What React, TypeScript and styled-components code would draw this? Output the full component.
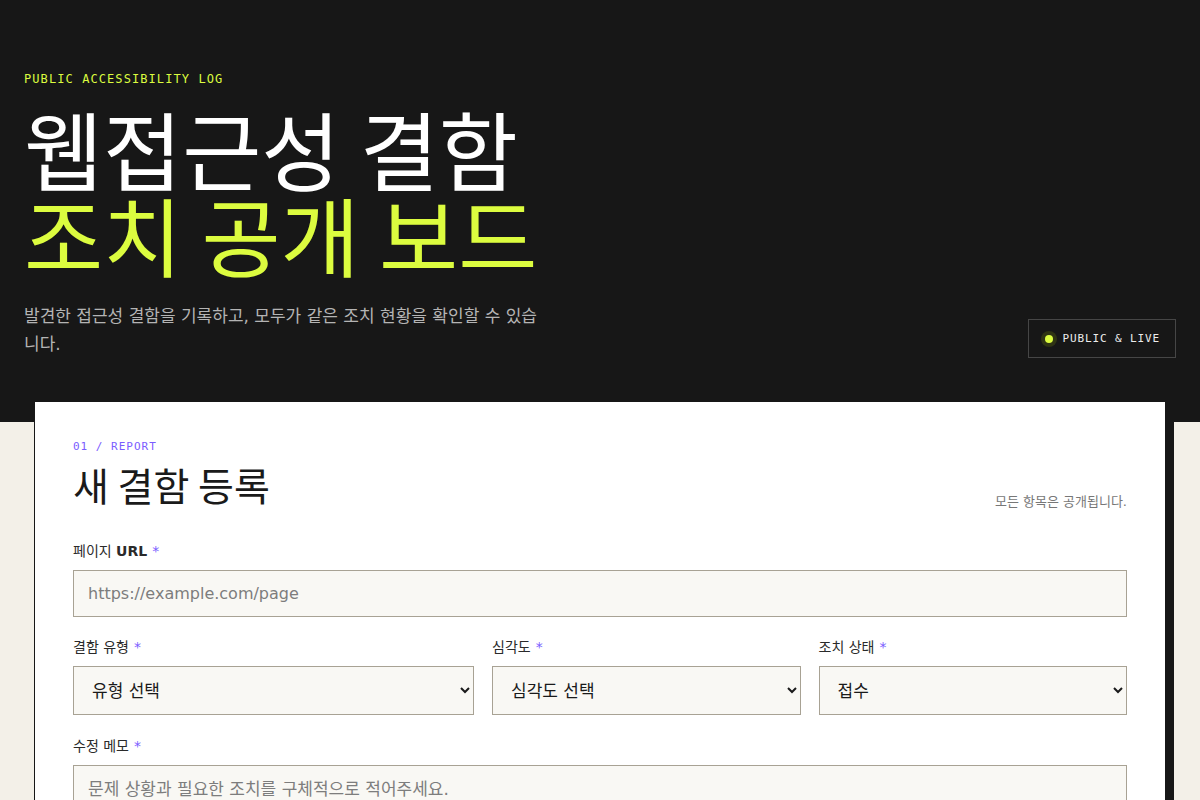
import React from "react";
import styled, { createGlobalStyle } from "styled-components";

const Global = createGlobalStyle`
  html, body { margin: 0; padding: 0; }
  body {
    background: #f3f0e8;
    font-family: "DejaVu Sans", "Noto Sans CJK KR", sans-serif;
    color: #1a1a1a;
  }
  * { box-sizing: border-box; }
`;

const mono = `"DejaVu Sans Mono", "Noto Sans CJK KR", monospace`;

const Hero = styled.header`
  background: #171717;
  padding: 72px 24px 64px;
`;

const Eyebrow = styled.div<{ $color: string; $size: number }>`
  font-family: ${mono};
  font-size: ${(p) => p.$size}px;
  line-height: 14px;
  letter-spacing: 0.09em;
  color: ${(p) => p.$color};
`;

const Title = styled.h1`
  margin: 19px 0 0;
  font-family: "Noto Sans CJK KR", sans-serif;
  font-weight: 400;
  font-size: 86px;
  line-height: 86px;
  letter-spacing: 0;
  color: #ffffff;
`;

const TitleLine = styled.span<{ $accent?: boolean }>`
  display: block;
  color: ${(p) => (p.$accent ? "#dcfc3f" : "#ffffff")};
`;

const HeroFoot = styled.div`
  display: flex;
  justify-content: space-between;
  align-items: flex-end;
  margin-top: 25px;
`;

const Lead = styled.p`
  margin: 0;
  max-width: 520px;
  font-size: 17px;
  line-height: 28px;
  color: #b4b4b4;
`;

const Badge = styled.div`
  display: flex;
  align-items: center;
  gap: 9px;
  height: 39px;
  padding: 0 15px 0 16px;
  border: 1px solid #464646;
  font-family: ${mono};
  font-size: 11px;
  letter-spacing: 0.08em;
  color: #ececec;
`;

const Dot = styled.span`
  width: 8px;
  height: 8px;
  border-radius: 50%;
  background: #dcfc3f;
  box-shadow: 0 0 0 4px #2f3414;
`;

const Card = styled.section`
  margin: -21px 34px 0;
  background: #ffffff;
  border: 1px solid #171717;
  box-shadow: 8px 8px 0 #171717;
  padding: 38px 38px 40px;
`;

const CardHead = styled.div`
  display: flex;
  justify-content: space-between;
  align-items: flex-end;
`;

const CardTitle = styled.h2`
  margin: 6px 0 0;
  font-family: "Noto Sans CJK KR", sans-serif;
  font-weight: 400;
  font-size: 39px;
  line-height: 48px;
  color: #1a1a1a;
`;

const Note = styled.span`
  font-size: 13px;
  color: #777;
  margin-bottom: -2px;
`;

const Field = styled.div<{ $top?: number }>`
  display: flex;
  flex-direction: column;
  gap: 9px;
  margin-top: ${(p) => p.$top ?? 22}px;
`;

const Row = styled.div`
  display: grid;
  grid-template-columns: 1.3fr 1fr 1fr;
  gap: 18px;
  margin-top: 21px;
`;

const Label = styled.label`
  font-size: 14px;
  line-height: 19px;
  color: #2a2a2a;
`;

const Req = styled.span`
  color: #7a5cff;
  margin-left: 5px;
`;

const Input = styled.input`
  height: 47px;
  border: 1px solid #a8a294;
  background: #f9f8f4;
  padding: 0 14px;
  font-family: "DejaVu Sans", "Noto Sans CJK KR", sans-serif;
  font-size: 16px;
  color: #1a1a1a;
  border-radius: 0;
  &::placeholder { color: #7d7d7d; }
`;

const Select = styled.select`
  height: 49px;
  border: 1px solid #a8a294;
  background: #f9f8f4;
  padding: 0 10px 0 14px;
  font-family: "DejaVu Sans", "Noto Sans CJK KR", sans-serif;
  font-size: 17px;
  color: #1a1a1a;
  border-radius: 0;
`;

const TextArea = styled.textarea`
  height: 120px;
  border: 1px solid #a8a294;
  background: #f9f8f4;
  padding: 11px 14px;
  font-family: "DejaVu Sans", "Noto Sans CJK KR", sans-serif;
  font-size: 17px;
  line-height: 24px;
  resize: vertical;
  border-radius: 0;
  &::placeholder { color: #7d7d7d; }
`;

export default function App() {
  return (
    <>
      <Global />
      <Hero>
        <Eyebrow $color="#dcfc3f" $size={12}>PUBLIC ACCESSIBILITY LOG</Eyebrow>
        <Title>
          <TitleLine>웹접근성 결함</TitleLine>
          <TitleLine $accent>조치 공개 보드</TitleLine>
        </Title>
        <HeroFoot>
          <Lead>발견한 접근성 결함을 기록하고, 모두가 같은 조치 현황을 확인할 수 있습니다.</Lead>
          <Badge>
            <Dot />
            PUBLIC &amp; LIVE
          </Badge>
        </HeroFoot>
      </Hero>
      <Card>
        <Eyebrow $color="#7a5cff" $size={11}>01 / REPORT</Eyebrow>
        <CardHead>
          <CardTitle>새 결함 등록</CardTitle>
          <Note>모든 항목은 공개됩니다.</Note>
        </CardHead>
        <Field $top={34}>
          <Label>
            페이지 <b>URL</b>
            <Req>*</Req>
          </Label>
          <Input placeholder="https://example.com/page" />
        </Field>
        <Row>
          <Field $top={0}>
            <Label>
              결함 유형<Req>*</Req>
            </Label>
            <Select defaultValue="">
              <option value="">유형 선택</option>
            </Select>
          </Field>
          <Field $top={0}>
            <Label>
              심각도<Req>*</Req>
            </Label>
            <Select defaultValue="">
              <option value="">심각도 선택</option>
            </Select>
          </Field>
          <Field $top={0}>
            <Label>
              조치 상태<Req>*</Req>
            </Label>
            <Select defaultValue="접수">
              <option value="접수">접수</option>
            </Select>
          </Field>
        </Row>
        <Field>
          <Label>
            수정 메모<Req>*</Req>
          </Label>
          <TextArea placeholder="문제 상황과 필요한 조치를 구체적으로 적어주세요." />
        </Field>
      </Card>
    </>
  );
}
